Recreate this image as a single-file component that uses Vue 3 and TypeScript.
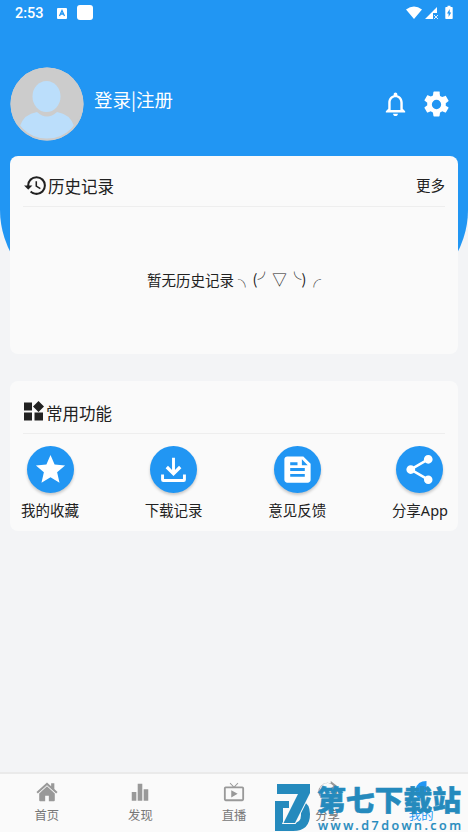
<script setup lang="ts">
interface Item { label: string; icon: string }

const actions: Item[] = [
  { label: '我的收藏', icon: 'M12 17.27 18.18 21l-1.64-7.03L22 9.24l-7.19-.61L12 2 9.19 8.63 2 9.24l5.46 4.73L5.82 21z' },
  { label: '下载记录', icon: 'M11 4h2v8.300l2.800-2.800 1.600 1.600L12 16.500l-5.400-5.400 1.600-1.600 2.800 2.800zM3.500 15.500h2v3h13v-3h2v3.500q0 1.500-1.500 1.500H5q-1.500 0-1.500-1.500z' },
  { label: '意见反馈', icon: 'M16 3H5c-1.1 0-2 .9-2 2v14c0 1.1.9 2 2 2h14c1.1 0 2-.9 2-2V8zM7 7h5v2H7zm10 10H7v-2h10zm0-4H7v-2h10zm-2-4V5l4 4z' },
  { label: '分享App', icon: 'M18 16.08c-.76 0-1.44.3-1.96.77L8.91 12.7c.05-.23.09-.46.09-.7s-.04-.47-.09-.7l7.05-4.11c.54.5 1.25.81 2.04.81 1.66 0 3-1.34 3-3s-1.34-3-3-3-3 1.34-3 3c0 .24.04.47.09.7L8.04 9.81C7.5 9.31 6.79 9 6 9c-1.66 0-3 1.34-3 3s1.34 3 3 3c.79 0 1.5-.31 2.04-.81l7.12 4.16c-.05.21-.08.43-.08.65 0 1.61 1.31 2.92 2.92 2.92s2.92-1.31 2.92-2.92-1.31-2.92-2.92-2.92z' },
]

const tabs: Item[] = [
  { label: '首页', icon: 'M12 1.500 .5 12l1.500 1.600L12 4.500l10 9.100 1.500-1.600-3.500-3.200V2.500h-3.500v3.200zM12 5.800 3.500 13.500V21q0 1 1 1H10v-6h4v6h5.500q1 0 1-1v-7.500z' },
  { label: '发现', icon: 'M3 12h5v9.500H3zM9.500 3h5v18.500h-5zM16 9h5v12.500h-5z' },
  { label: '直播', icon: 'M21 6h-7.600l3.300-3.300L16 2l-4 4-4-4-.7.7L10.600 6H3a2 2 0 0 0-2 2v12c0 1.100.9 2 2 2h18a2 2 0 0 0 2-2V8a2 2 0 0 0-2-2zm0 14H3V8h18zM9 10v8l7-4z' },
  { label: '分享', icon: 'M2.500 16A10 10 0 0 1 15 2.500V0l7 5.500-7 5.500V8L18 5.500A8 8 0 0 0 4.500 16zM20 10h2a10 10 0 0 1-8 11v-2a8 8 0 0 0 6-9z' },
  { label: '我的', icon: 'M18 0v9q0 8-8 10-5-2-4-10Q8 0 18 0z' },
]
</script>

<template>
  <main class="screen">
    <div class="backdrop"></div>
    <header class="status">
      <span class="time">2:53</span>
      <svg class="badge" viewBox="0 0 10 11"><rect width="10" height="11" rx="1" fill="#fff" /><path d="M2.500 8 5 2.500 7.500 8M3.500 6h3" fill="none" stroke="#2196f3" stroke-width="1.300" /></svg>
      <span class="square"></span>
      <svg class="signals" viewBox="0 0 48 16">
        <path d="M0 4.500Q8-1.500 16 4.500L8 14zM31 2v6h-4v6h-8z" fill="#fff" />
        <path d="m28 10 4 4m0-4-4 4" stroke="#d8edff" stroke-width="1" />
        <path d="M40 2h1.500V.8h3V2H46q.7 0 .7.7v10.600q0 .7-.7.7h-6q-.7 0-.7-.7V2.700q0-.7.7-.7z" fill="#fff" />
        <path d="M43.700 4 41 8.500h1.600V12l2.600-4.500h-1.500z" fill="#2196f3" />
      </svg>
    </header>
    <section class="profile">
      <svg class="avatar" viewBox="0 0 74 74">
        <circle cx="37" cy="37" r="36.500" fill="#ccc" />
        <ellipse cx="36.500" cy="29.500" rx="14" ry="15.500" fill="#bbdefb" />
        <path d="M10 59Q14 47 27 45q10 9 20 0 13 2 17 14-11 13.500-27 13.500T10 59z" fill="#bbdefb" />
        <circle cx="37" cy="37" r="35.500" fill="none" stroke="#ccc" stroke-width="2" />
      </svg>
      <span class="login">登录|注册</span>
      <svg class="bell" viewBox="0 0 24 24"><path d="M12 22c1.100 0 2-.9 2-2h-4c0 1.100.9 2 2 2zm6-6v-5c0-3.070-1.630-5.640-4.500-6.320V4c0-.83-.67-1.500-1.500-1.500s-1.500.67-1.500 1.500v.68C7.640 5.360 6 7.920 6 11v5l-2 2v1h16v-1zm-2 1H8v-6c0-2.480 1.510-4.500 4-4.500s4 2.020 4 4.500z" /></svg>
      <svg class="gear" viewBox="0 0 24 24"><path d="M19.140 12.940c.04-.3.060-.61.060-.94s-.02-.64-.07-.94l2.030-1.580c.18-.14.230-.41.120-.61l-1.920-3.320c-.12-.22-.37-.29-.59-.22l-2.390.96c-.5-.38-1.030-.7-1.620-.94l-.36-2.540A.48.48 0 0 0 13.920 2h-3.840c-.24 0-.43.17-.47.41l-.36 2.540c-.59.24-1.130.57-1.620.94l-2.390-.96c-.22-.08-.47 0-.59.22L2.740 8.470c-.12.210-.08.470.12.610l2.030 1.580c-.05.3-.09.630-.09.940s.02.640.070.940l-2.030 1.580c-.18.140-.23.410-.12.610l1.920 3.320c.12.220.370.290.590.220l2.390-.96c.5.380 1.030.700 1.620.940l.36 2.540c.05.240.240.410.480.410h3.840c.24 0 .44-.17.470-.41l.36-2.540c.59-.24 1.130-.56 1.620-.94l2.390.96c.22.080.470 0 .59-.22l1.920-3.320c.12-.22.070-.47-.12-.61zM12 15.600a3.600 3.600 0 1 1 0-7.200 3.600 3.600 0 0 1 0 7.200z" /></svg>
    </section>

    <section class="card history">
      <div class="heading">
        <svg class="clock" viewBox="0 0 24 24"><path d="M13 3a9 9 0 0 0-9 9H1l3.890 3.890.070.140L9 12H6c0-3.870 3.130-7 7-7s7 3.130 7 7-3.130 7-7 7c-1.930 0-3.680-.79-4.940-2.060l-1.420 1.420A8.950 8.950 0 0 0 13 21a9 9 0 0 0 0-18zm-1 5v5l4.280 2.540.72-1.210-3.500-2.080V8z" /></svg>
        <h2>历史记录</h2>
        <span class="more">更多</span>
      </div>
      <p class="empty"><span>暂无历史记录</span><span class="face"><i>╮</i><b>(</b><i>╯</i><i class="tri">▽</i><i>╰</i><b>)</b><i class="end">╭</i></span></p>
    </section>

    <section class="card tools">
      <div class="heading">
        <svg class="widgets" viewBox="0 0 20 20"><path d="M0 1.500h8v8H0zM0 11.500h8v8H0zM10.500 11.500h8.500v8h-8.500zM14.500 0 20 5.500 14.500 11 9 5.500z" /></svg>
        <h2>常用功能</h2>
      </div>
      <div class="actions">
        <div v-for="a in actions" :key="a.label" class="action">
          <span class="disc"><svg viewBox="0 0 24 24"><path :d="a.icon" fill-rule="evenodd" /></svg></span>
          <span>{{ a.label }}</span>
        </div>
      </div>
    </section>

    <nav class="tabs">
      <div v-for="(t, i) in tabs" :key="t.label" class="tab" :class="{ active: i === 4 }">
        <svg viewBox="0 0 24 24"><path :d="t.icon" fill-rule="evenodd" /></svg>
        <span>{{ t.label }}</span>
      </div>
    </nav>

    <svg class="watermark" viewBox="0 0 190 50">
      <path d="M1 19h14v7H9v15h10q8 0 8-8 0-4-3-6l4-9q8 4 8 14 0 17-17 17H1z" />
      <path class="seven" d="M3 2h33v9L21 41H9.500L24 12H3z" />
      <text class="brand" x="43" y="29" textLength="144" lengthAdjust="spacingAndGlyphs">第七下载站</text>
      <text class="site" x="44" y="48" textLength="143">www.d7down.com</text>
    </svg>
  </main>
</template>

<style>
body { margin: 0; background: #f3f4f6; }
</style>

<style scoped>
.screen { position: relative; display: flex; flex-direction: column; width: 468px; height: 832px; overflow: hidden; background: #f3f4f6; color: #212121; font: 14.5px/20px "Noto Sans", "Noto Sans CJK SC", sans-serif; }
.backdrop { position: absolute; inset: 0 0 auto; height: 354px; background: #2196f3; border-radius: 0 0 50% 50% / 0 0 144px 144px; }
.status, .profile, .card { position: relative; flex: none; }
.status { display: flex; align-items: center; height: 26px; padding: 0 14px 0 15px; box-sizing: border-box; color: #fff; }
.time { width: 42px; padding-top: 2px; font-family: Roboto, sans-serif; font-size: 14.5px; font-weight: 500; }
.badge { width: 10px; height: 11px; }
.square { width: 16px; height: 15px; margin: -1px 0 0 10px; border-radius: 3px; background: #fff; }
.signals { width: 48px; height: 16px; margin-left: auto; }
.profile { display: flex; height: 130px; padding: 41px 16px 0 10px; box-sizing: border-box; fill: #fff; }
.avatar { width: 74px; height: 74px; flex: none; }
.login { margin: 18px auto 0 10px; color: #fff; font: 18.5px/28px "Noto Sans CJK SC", sans-serif; }
.bell { width: 29px; height: 30px; margin: 22px 11px 0 0; }
.gear { width: 31px; height: 31px; margin-top: 22px; }
.card { margin: 0 10px; padding: 0 13px; border-radius: 8px; background: #fafafa; }
.history { height: 198px; }
.heading { display: flex; align-items: center; height: 51px; padding-top: 9px; box-sizing: border-box; border-bottom: 1px solid #eee; }
h2 { margin: 1px 0 0; font: 16.5px/24px "Noto Sans CJK SC", sans-serif; }
.clock { width: 25px; height: 25px; fill: #212121; }
.more { margin: -2px 0 0 auto; }
.empty { display: flex; height: 20px; margin: 63px 0 0 124px; }
.face { display: flex; margin: -1px 0 0 4px; font-family: "Noto Sans CJK SC", sans-serif; }
.face i { width: 14.5px; font-style: normal; text-align: center; }
.face b { width: 5px; font-weight: 400; }
.face .tri { width: 15px; }
.face .end { margin-left: 0; }
.tools { height: 150px; margin-top: 27px; }
.tools .heading { height: 53px; padding-top: 11px; }
.widgets { width: 20px; height: 20px; margin: 0 2px 3px 1px; fill: #212121; }
.actions { display: flex; justify-content: space-between; padding-top: 12px; margin: 0 -3px 0 -2px; }
.action { display: flex; flex-direction: column; align-items: center; gap: 7px; white-space: nowrap; }
.disc { display: flex; align-items: center; justify-content: center; width: 47px; height: 47px; border-radius: 50%; background: #2196f3; box-shadow: 0 2px 3px #0003; }
.disc svg { width: 35px; height: 35px; fill: #fff; }
.tabs { display: flex; flex: none; height: 60px; margin-top: auto; box-sizing: border-box; border-top: 2px solid #eaeaea; background: #fafafa; color: #777; font-size: 12.3px; }
.tab { display: flex; flex: 1; flex-direction: column; align-items: center; padding-top: 7px; line-height: 20px; }
.tab svg { width: 22px; height: 22px; margin-bottom: 3px; fill: #999; }
.active { color: #2196f3; }
.active svg { fill: #2196f3; }
.watermark { position: absolute; left: 274px; top: 782px; width: 190px; height: 50px; fill: #258abd; }
.seven { stroke: #fafafa; stroke-width: 2px; paint-order: stroke; }
.brand { font: 900 28.5px "Noto Sans CJK SC", sans-serif; stroke: #258abd; stroke-width: .5px; }
.site { font: 500 12.5px "Noto Sans", sans-serif; stroke: #258abd; stroke-width: .2px; }
</style>
